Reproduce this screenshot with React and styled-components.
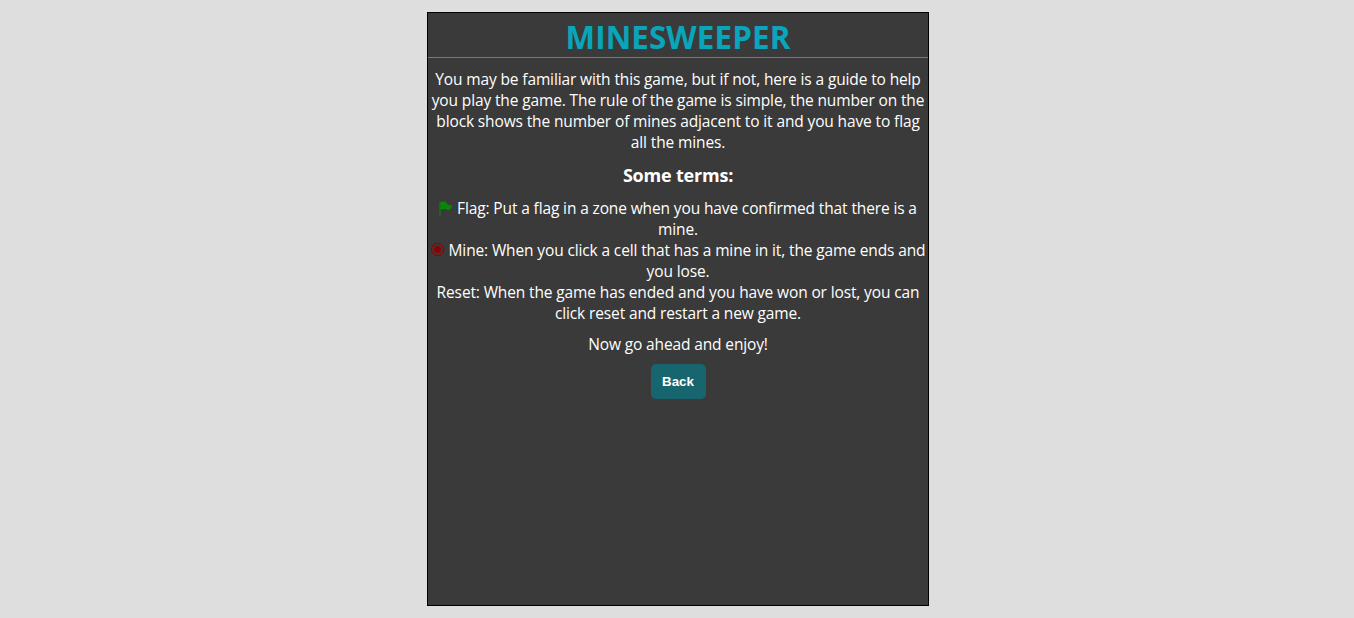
import React from 'react';
import styled, { createGlobalStyle } from 'styled-components';

const Global = createGlobalStyle`
  body { margin: 0; background: #dedede; font-family: "Open Sans", "Noto Sans", sans-serif; overflow: hidden; }
`;
const Page = styled.main`
  box-sizing: border-box; height: 618px; padding-top: 12px; padding-left: 2px;
  display: flex; justify-content: center; align-items: flex-start;
`;
const Panel = styled.section`
  width: 500px; height: 592px; border: 1px solid #000; background: #3a3a3a; color: #fff;
  text-align: center; display: flex; flex-direction: column; align-items: center;
`;
const Title = styled.h1`
  margin: 0; width: 100%; height: 44px; line-height: 48px; border-bottom: 1px solid #08a5bb;
  color: #08a5bb; font-size: 31.4px; font-weight: 700; letter-spacing: 0.1px;
`;
const Block = styled.div`
  margin-top: ${p => p.$gap}px; font-size: 15.5px; line-height: 21px; letter-spacing: -0.13px;
`;
const Line = styled.div`
  height: 21px; white-space: nowrap;
`;
const Heading = styled.h2`
  margin: 10px 0 0; height: 25px; line-height: 24px; font-size: 18px; font-weight: 700; letter-spacing: -0.2px;
`;
const Back = styled.button`
  margin-top: 9px; width: 55px; height: 35px; border: 0; border-radius: 5px; padding: 0;
  background: #17666f; color: #fff; font: bold 13.333px "Liberation Sans", Arial, sans-serif;
`;
const Icon = styled.svg`
  width: 15px; height: 15px; margin-right: -1px; vertical-align: -2px; color: ${p => p.$color};
`;

const FlagIcon = () => (
  <Icon $color="#048a08" viewBox="0 0 15 15" fill="currentColor" aria-hidden="true">
    <path d="M0.500 0.500h1.100v14h-1.100z" />
    <path d="M1.600 1.200C4.200 0 6.800 0.300 7.800 2.600c.9 1.600 3 2 5.400 1.900C12.400 7.600 10.500 9.500 8.200 8.700 6.300 8 4.600 7.500 1.600 8.500z" />
  </Icon>
);
const MineIcon = () => (
  <Icon $color="#8b0000" viewBox="0 0 15 15" aria-hidden="true">
    <circle cx="6.500" cy="6.500" r="6" fill="none" stroke="currentColor" strokeWidth="1" />
    <circle cx="6.500" cy="6.500" r="3.500" fill="currentColor" />
  </Icon>
);

export default function App() {
  return (
    <Page>
      <Global />
      <Panel>
        <Title>MINESWEEPER</Title>
        <Block $gap={11}>
          <Line>You may be familiar with this game, but if not, here is a guide to help</Line>
          <Line>you play the game. The rule of the game is simple, the number on the</Line>
          <Line>block shows the number of mines adjacent to it and you have to flag</Line>
          <Line>all the mines.</Line>
        </Block>
        <Heading>Some terms:</Heading>
        <Block $gap={10}>
          <Line><FlagIcon /> Flag: Put a flag in a zone when you have confirmed that there is a</Line>
          <Line>mine.</Line>
          <Line><MineIcon /> Mine: When you click a cell that has a mine in it, the game ends and</Line>
          <Line>you lose.</Line>
          <Line>Reset: When the game has ended and you have won or lost, you can</Line>
          <Line>click reset and restart a new game.</Line>
        </Block>
        <Block $gap={10}><Line>Now go ahead and enjoy!</Line></Block>
        <Back>Back</Back>
      </Panel>
    </Page>
  );
}
